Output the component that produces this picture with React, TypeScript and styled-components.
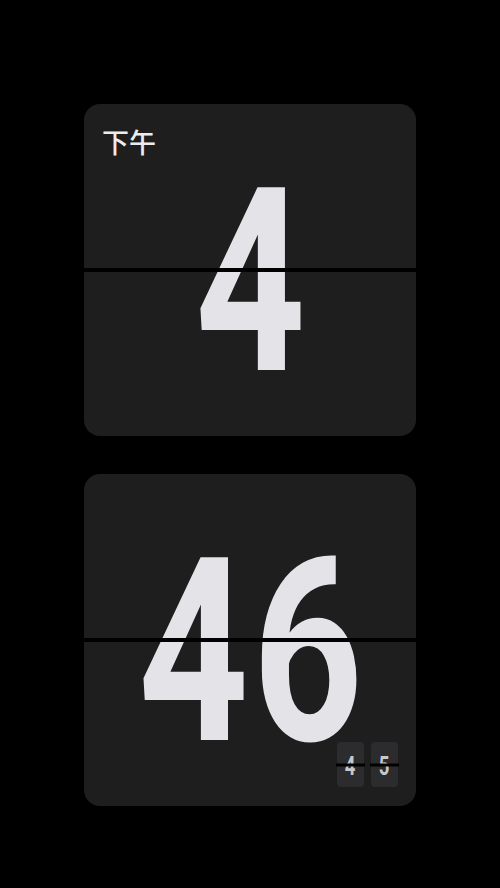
import { FC } from "react";
import styled, { createGlobalStyle } from "styled-components";

const GlobalStyle = createGlobalStyle`
  html, body {
    margin: 0;
    padding: 0;
    background: #000;
  }
  #root {
    min-height: 888px;
  }
`;

const Screen = styled.div`
  width: 500px;
  height: 888px;
  background: #000;
  display: flex;
  flex-direction: column;
  align-items: center;
  padding-top: 104px;
  gap: 38px;
  box-sizing: border-box;
  font-family: "Roboto", "Noto Sans CJK SC", sans-serif;
`;

const Card = styled.div`
  position: relative;
  width: 332px;
  height: 332px;
  border-radius: 16px;
  background: #1e1e1f;
  display: flex;
  align-items: center;
  justify-content: center;
  overflow: hidden;
`;

// condensed look: Roboto bold squeezed horizontally
const BigDigits = styled.div`
  font-family: "Roboto", "Liberation Sans", sans-serif;
  font-weight: 700;
  font-size: 257px;
  line-height: 1;
  color: #e4e4e8;
  letter-spacing: 5px;
  margin-right: -5px;
  white-space: nowrap;
  transform: translateY(12px) scaleX(0.75);
`;

const Divider = styled.div`
  position: absolute;
  left: 0;
  right: 0;
  top: 50%;
  height: 4px;
  transform: translateY(-50%);
  background: #000;
`;

const Meridiem = styled.div`
  position: absolute;
  left: 18px;
  top: 24px;
  font-family: "Noto Sans CJK SC", sans-serif;
  font-weight: 500;
  font-size: 27px;
  line-height: 1;
  color: #ececee;
`;

const MiniFlip = styled.div`
  position: absolute;
  right: 18px;
  bottom: 19px;
  display: flex;
  gap: 7px;
`;

const MiniCard = styled.div`
  position: relative;
  width: 27px;
  height: 45px;
  border-radius: 4px;
  background: #2c2c2e;
  display: flex;
  align-items: center;
  justify-content: center;
`;

const MiniDigit = styled.span`
  font-family: "Roboto", "Liberation Sans", sans-serif;
  font-weight: 700;
  font-size: 25px;
  line-height: 1;
  color: #c8c8cc;
  transform: translateY(2px) scaleX(0.74);
`;

const MiniLine = styled.div`
  position: absolute;
  left: -1px;
  right: -1px;
  top: 50%;
  height: 3px;
  transform: translateY(-50%);
  background: #000;
`;

const FlipCard: FC<{ value: string; label?: string; seconds?: string[] }> = ({
  value,
  label,
  seconds,
}) => (
  <Card>
    {label && <Meridiem>{label}</Meridiem>}
    <BigDigits>{value}</BigDigits>
    <Divider />
    {seconds && (
      <MiniFlip>
        {seconds.map((s, i) => (
          <MiniCard key={i}>
            <MiniDigit>{s}</MiniDigit>
            <MiniLine />
          </MiniCard>
        ))}
      </MiniFlip>
    )}
  </Card>
);

const App: FC = () => (
  <>
    <GlobalStyle />
    <Screen>
      <FlipCard value="4" label="下午" />
      <FlipCard value="46" seconds={["4", "5"]} />
    </Screen>
  </>
);

export default App;
